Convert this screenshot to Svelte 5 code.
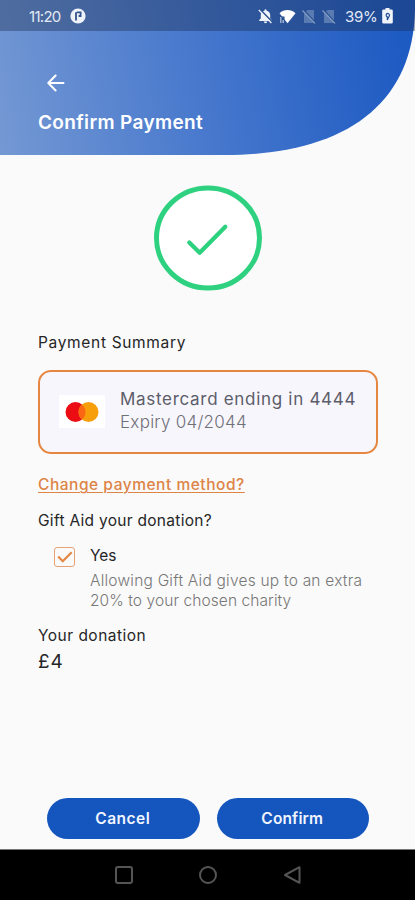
<script lang="ts">
  let giftAid = $state(true);

  const card = { brand: 'Mastercard', last4: '4444', expiry: '04/2044' };
  const donation = 4;
</script>

<div class="screen">
  <header class="header">
    <svg class="header-shape" viewBox="0 0 415 155" preserveAspectRatio="none" aria-hidden="true">
      <defs>
        <linearGradient id="header-fill" gradientUnits="userSpaceOnUse" x1="-10" y1="100" x2="400" y2="20">
          <stop offset="0" stop-color="#7498d3" />
          <stop offset="0.5" stop-color="#4778cd" />
          <stop offset="1" stop-color="#1d5ac2" />
        </linearGradient>
      </defs>
      <path d="M0 0H415V10C413 108 340 155 225 155H0Z" fill="url(#header-fill)" />
    </svg>

    <div class="status-bar">
      <span class="clock">11:20</span>
      <svg class="app-badge" viewBox="0 0 16 16"><circle cx="8" cy="8" r="7.6" fill="#eef2f9" /><path d="M6 12.5V4.2M6.800 4.400h3.800v3.600H8.600" fill="none" stroke="#34548c" stroke-width="1.800" /></svg>
      <div class="status-icons">
        <svg width="15" height="16" viewBox="0 0 15 16"><path d="M7.500 1.200a1 1 0 0 1 1 1v.5c2.200.5 3.700 2.100 3.700 4.300v3.400l1.600 1.600v.9H1.200V12l1.600-1.600V7c0-2.200 1.500-3.800 3.700-4.300v-.5a1 1 0 0 1 1-1zM5.800 13.600h3.400a1.700 1.700 0 0 1-3.400 0z" fill="#eef2f9" /><path d="M2.200 1.600 14.600 14.200" stroke="#27508f" stroke-width="1.600" /><path d="M.8 2 13.400 15" stroke="#eef2f9" stroke-width="1.300" /></svg>
        <svg width="17" height="15" viewBox="0 0 17 15"><path d="M.5 4.200C5-.2 12-.2 16.500 4.200L8.500 14.200z" fill="#fff" /><path d="M1 7.500h4.500V14H1z" fill="#27508f" /><path d="M1.800 8v6M4.200 11v3" stroke="#aebfdd" stroke-width="1.300" /></svg>
        <svg width="14" height="15" viewBox="0 0 14 15"><path d="M5.500 1H12v13H2V4.500z" fill="#597bb2" /><path d="M1.500.8l12 13" stroke="#27508f" stroke-width="1.500" /><path d="M.5 1.500l12.500 13" stroke="#7f99c4" stroke-width="1.200" /></svg>
        <svg width="14" height="15" viewBox="0 0 14 15"><path d="M5.500 1H12v13H2V4.500z" fill="#597bb2" /><path d="M1.500.8l12 13" stroke="#27508f" stroke-width="1.500" /><path d="M.5 1.500l12.500 13" stroke="#7f99c4" stroke-width="1.200" /></svg>
        <span class="percent">39%</span>
        <svg width="11" height="16" viewBox="0 0 11 16"><path d="M3.500 0h4v1.500h2A1.300 1.300 0 0 1 10.800 2.800v11.400a1.300 1.300 0 0 1-1.300 1.300h-8A1.300 1.300 0 0 1 .2 14.200V2.800a1.300 1.300 0 0 1 1.300-1.300h2z" fill="#f1f5fb" /><path d="M5.500 5.300a2 2 0 0 1 1.500 3.300L5.300 12V8.900A1.900 1.900 0 0 1 5.500 5.300z" fill="none" stroke="#224c94" stroke-width="1.200" /></svg>
      </div>
    </div>

    <button class="back" type="button" aria-label="Back">
      <svg width="18" height="18" viewBox="0 0 18 18" fill="none" stroke="#fff" stroke-width="2" stroke-linecap="round" stroke-linejoin="round"><path d="M16.500 9H1.500M8.600 1.500 1.300 9l7.300 7.500" /></svg>
    </button>
    <h1>Confirm Payment</h1>
  </header>

  <main>
    <svg class="success" width="108" height="106" viewBox="0 0 108 106" fill="none" stroke="#2ed17f">
      <ellipse cx="54" cy="53" rx="51.500" ry="50" fill="#fff" stroke-width="5" />
      <path d="M35.300 57.500 45.700 67.800 71.300 41.800" stroke-width="4.300" stroke-linecap="round" stroke-linejoin="round" />
    </svg>

    <h2 class="summary-title">Payment Summary</h2>

    <div class="card">
      <div class="card-logo">
        <svg width="34" height="22" viewBox="0 0 34 22"><circle cx="10.500" cy="11" r="10" fill="#eb0d13" /><circle cx="23.500" cy="11" r="10" fill="#f79f0a" /><path d="M17 3.400a10 10 0 0 1 0 15.200 10 10 0 0 1 0-15.200z" fill="#fa6712" /></svg>
      </div>
      <div class="card-text">
        <span class="card-name">{card.brand} ending in {card.last4}</span>
        <span class="card-expiry">Expiry {card.expiry}</span>
      </div>
    </div>

    <button class="change" type="button">Change payment method?</button>

    <h2 class="gift-title">Gift Aid your donation?</h2>
    <div class="gift">
      <button class="checkbox" type="button" role="checkbox" aria-checked={giftAid} aria-label="Gift Aid" onclick={() => giftAid = !giftAid}>
        {#if giftAid}
          <svg width="16" height="12" viewBox="0 0 16 12" fill="none" stroke="#e58742" stroke-width="2.200"><path d="M1.200 5.600 5.700 10.200 14.700 1.200" /></svg>
        {/if}
      </button>
      <div class="gift-text">
        <span class="yes">Yes</span>
        <p><span class="line-one">Allowing Gift Aid gives up to an extra</span><br><span class="line-two">20% to your chosen charity</span></p>
      </div>
    </div>

    <h2 class="donation-title">Your donation</h2>
    <span class="amount">£{donation}</span>
  </main>

  <div class="actions">
    <button class="action cancel" type="button">Cancel</button>
    <button class="action confirm" type="button">Confirm</button>
  </div>

  <nav class="nav-bar">
    <svg width="20" height="20" viewBox="0 0 20 20"><rect x="2" y="2" width="16" height="16" rx="2" /></svg>
    <svg width="20" height="20" viewBox="0 0 20 20"><circle cx="10" cy="10" r="8" /></svg>
    <svg width="20" height="20" viewBox="0 0 20 20"><path d="M17.500 2.200v15.600L3 10z" /></svg>
  </nav>
</div>

<style>
  :global(body) {
    margin: 0;
    background: #fafafa;
  }

  .screen {
    display: flex;
    flex-direction: column;
    width: 415px;
    height: 900px;
    overflow: hidden;
    background: #fafafa;
    color: #262626;
    font-family: Inter, "Noto Sans", sans-serif;
    white-space: nowrap;
  }

  button {
    padding: 0;
    border: 0;
    background: transparent;
    color: inherit;
    font: inherit;
    cursor: pointer;
  }

  h1,
  h2,
  p {
    margin: 0;
  }

  svg {
    display: block;
    flex: none;
  }

  .header {
    position: relative;
    height: 155px;
    flex: none;
    color: #fff;
  }

  .header-shape {
    position: absolute;
    inset: 0;
    width: 100%;
    height: 100%;
  }

  .status-bar {
    position: relative;
    display: flex;
    align-items: center;
    height: 31px;
    box-sizing: border-box;
    padding: 1px 22px 0 29px;
    background: rgb(30 45 75 / 38%);
    color: #e3eaf5;
    font-size: 15px;
  }

  .clock {
    width: 33px;
    letter-spacing: -0.7px;
  }

  .app-badge {
    width: 16px;
    height: 16px;
    margin-left: 8px;
  }

  .status-icons {
    display: flex;
    align-items: center;
    margin-left: auto;
    gap: 6px;
  }

  .percent {
    width: 34px;
    margin-left: 3px;
    margin-right: -3px;
    letter-spacing: -0.3px;
  }

  .back {
    position: relative;
    display: block;
    margin: 43px 0 0 47px;
  }

  h1 {
    position: relative;
    margin: 18px 0 0 38px;
    font-size: 19px;
    font-weight: 600;
    line-height: 26px;
    letter-spacing: 0.35px;
  }

  main {
    display: flex;
    flex: 1;
    flex-direction: column;
    align-items: flex-start;
    padding: 30px 38px 0;
  }

  .success {
    margin-left: 116px;
  }

  h2 {
    font-size: 15.5px;
    font-weight: 400;
    line-height: 20px;
  }

  .summary-title {
    margin-top: 42px;
    letter-spacing: 0.67px;
  }

  .card {
    display: flex;
    width: 340px;
    height: 84px;
    box-sizing: border-box;
    margin-top: 17px;
    padding: 16px 0 0 19px;
    border: 2px solid #e58742;
    border-radius: 13px;
    background: #f7f6fd;
    color: #5c5d69;
  }

  .card-logo {
    display: flex;
    align-items: center;
    justify-content: center;
    width: 46px;
    height: 33px;
    margin: 7px 15px 0 0;
    background: #fff;
  }

  .card-text {
    display: flex;
    flex-direction: column;
    font-size: 17px;
    line-height: 23px;
  }

  .card-name {
    letter-spacing: 0.7px;
  }

  .card-expiry {
    color: #707078;
    font-weight: 300;
    letter-spacing: 0.25px;
  }

  .change {
    margin-top: 21px;
    color: #dd8446;
    font-size: 15.5px;
    font-weight: 500;
    line-height: 20px;
    letter-spacing: 0.53px;
    text-decoration: underline;
    text-decoration-thickness: 1px;
    text-underline-offset: 2px;
  }

  .gift-title {
    margin-top: 16px;
    letter-spacing: 0.29px;
  }

  .gift {
    display: flex;
    margin-top: 15px;
    padding-left: 16px;
  }

  .checkbox {
    display: flex;
    align-items: center;
    justify-content: center;
    width: 21px;
    height: 20px;
    box-sizing: border-box;
    margin-top: 1px;
    border: 1.5px solid #e7a273;
    border-radius: 3px;
  }

  .gift-text {
    margin-left: 15px;
    font-size: 15.5px;
    line-height: 20px;
  }

  .yes {
    display: block;
  }

  .gift-text p {
    margin-top: 5px;
    color: #777;
    font-weight: 300;
  }

  .line-one {
    letter-spacing: 0.22px;
  }

  .line-two {
    letter-spacing: 0.08px;
  }

  .donation-title {
    margin-top: 15px;
    letter-spacing: 0.48px;
  }

  .amount {
    margin-top: 4px;
    font-size: 19px;
    line-height: 24px;
    letter-spacing: 1px;
  }

  .actions {
    display: flex;
    gap: 17px;
    padding: 0 46px 10px 47px;
  }

  .action {
    flex: 1;
    height: 41px;
    border-radius: 21px;
    background: #1556be;
    color: #f0f5ff;
    font-size: 15.5px;
    font-weight: 600;
  }

  .cancel {
    padding-right: 1px;
    letter-spacing: 0.5px;
  }

  .confirm {
    padding-right: 1px;
    letter-spacing: 0.15px;
  }

  .nav-bar {
    display: flex;
    align-items: center;
    justify-content: center;
    gap: 64px;
    height: 50px;
    flex: none;
    border-top: 1px solid #777;
    background: #000;
  }

  .nav-bar svg {
    fill: none;
    stroke: #555;
    stroke-width: 2;
    stroke-linejoin: round;
  }
</style>
